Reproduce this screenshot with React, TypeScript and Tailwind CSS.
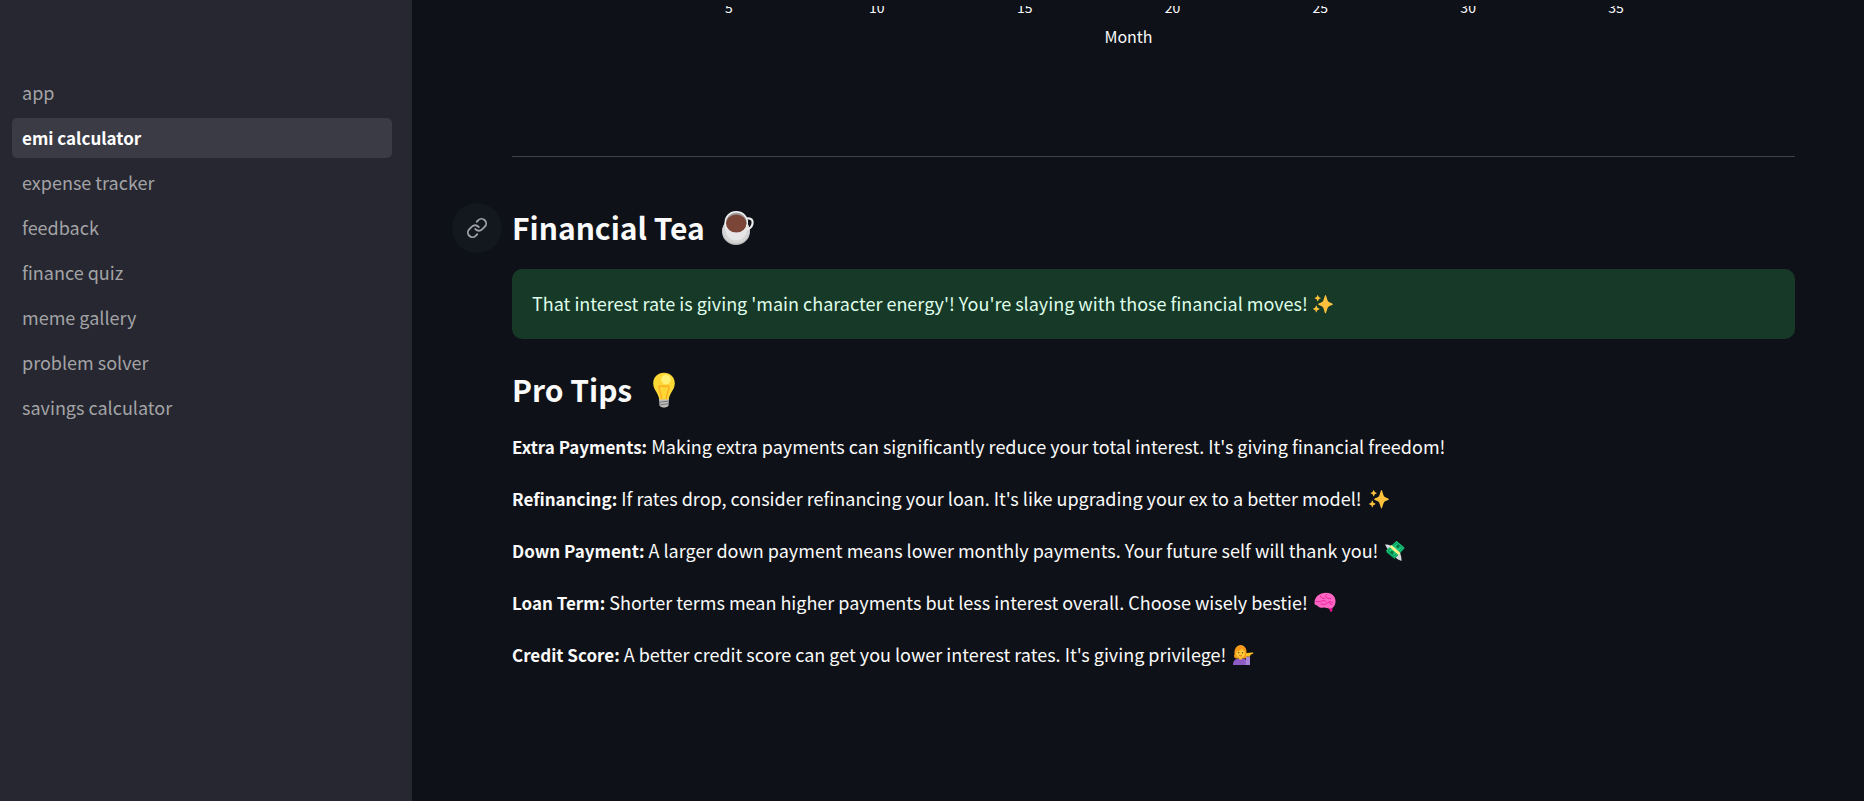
import type { ReactNode } from 'react';

const pages = [
  'app',
  'emi calculator',
  'expense tracker',
  'feedback',
  'finance quiz',
  'meme gallery',
  'problem solver',
  'savings calculator',
];

const months = [5, 10, 15, 20, 25, 30, 35];

function LinkIcon() {
  return (
    <svg viewBox="0 0 24 24" className="size-[22px]" fill="none" stroke="currentColor" strokeWidth="2" strokeLinecap="round" strokeLinejoin="round" aria-hidden="true">
      <path d="M10 13a5 5 0 0 0 7.54.54l3-3a5 5 0 0 0-7.07-7.07l-1.72 1.71" />
      <path d="M14 11a5 5 0 0 0-7.54-.54l-3 3a5 5 0 0 0 7.07 7.07l1.71-1.71" />
    </svg>
  );
}

function Cup() {
  return (
    <svg viewBox="0 0 34 36" className="h-9 w-[34px]" role="img" aria-label="Cup of tea">
      <ellipse cx="15" cy="21.500" rx="14" ry="13.500" fill="#bdbdbd" />
      <ellipse cx="15" cy="20.500" rx="13.600" ry="13" fill="#d4d4d4" />
      <path d="M26 8.5c4-1 6.500 2 5.500 5.500-.8 3-3.500 5.300-7 5.500" fill="none" stroke="#eeeeee" strokeWidth="2.200" />
      <path d="M3.600 12c0 10 2.400 18.500 11.400 18.500S27 22 27 12z" fill="#e6e6e6" />
      <ellipse cx="15.300" cy="11.800" rx="11.700" ry="10.800" fill="#f5f5f5" />
      <ellipse cx="15.300" cy="12.200" rx="10.400" ry="9.600" fill="#9e9e9e" />
      <ellipse cx="15.300" cy="13.600" rx="10.200" ry="9" fill="#7b4637" />
    </svg>
  );
}

function Bulb() {
  return (
    <svg viewBox="0 0 24 36" className="h-9 w-6" role="img" aria-label="Light bulb">
      <path d="M7 27h10l-.5 6.500c-1 1.500-2.500 2-4.500 2s-3.500-.5-4.500-2z" fill="#bdbdbd" />
      <path d="M7.300 30.300l9.400-1.300M7.500 33l9-1.300" stroke="#757575" strokeWidth="1" />
      <path d="M12 .8C5.800.8 1.200 5.300 1.200 11.200c0 6.800 5.200 9.300 6 16.300h9.600c.8-7 6-9.500 6-16.300C22.800 5.300 18.200.8 12 .8z" fill="#fdd835" />
      <path d="M9.700 27c0-5-3-9-2.600-12.500 1.300-2 2.400 1.200 4.900-.5 2.500 1.700 3.600-1.500 4.900.5.400 3.500-2.600 7.500-2.600 12.500" fill="none" stroke="#ffa726" strokeWidth="1.300" />
      <circle cx="14" cy="7.500" r="4.800" fill="#fff176" />
    </svg>
  );
}

function Sparkles() {
  return (
    <svg viewBox="0 0 22 22" className="size-[22px]" role="img" aria-label="Sparkles" fill="#fbc13c">
      <path d="M13.500 2c.8 0 1.600 5.400 2.800 6.600S21 10.600 21 11.300s-3.500 1.500-4.700 2.700-2 6.500-2.800 6.500-1.600-5.300-2.800-6.500S6 12 6 11.300s3.500-1.500 4.700-2.700S12.700 2 13.500 2z" />
      <path d="M5.700 2c.5 0 .7 1.700 1.100 2.100s1.900.6 1.900 1.100-1.500.7-1.900 1.100-.6 2.100-1.100 2.100-.7-1.700-1.100-2.100-1.900-.6-1.900-1.100 1.500-.7 1.900-1.100S5.200 2 5.700 2zM4.300 12.500c.5 0 .8 1.800 1.200 2.200s2 .7 2 1.200-1.600.8-2 1.200-.7 2.300-1.200 2.300-.8-1.900-1.200-2.300-2-.7-2-1.200 1.600-.8 2-1.200.7-2.200 1.200-2.200z" />
    </svg>
  );
}

function Money() {
  return (
    <svg viewBox="0 0 22 22" className="size-[22px]" role="img" aria-label="Money with wings">
      <path d="M1 4.500c3 0 5.500.5 8 2.500l-4 4C4 9 2 7 1 4.500z" fill="#d5dade" />
      <path d="M11 16.500l5-3.500c1 2 1.500 5 1.500 8-2-.8-5-2-6.500-4.500z" fill="#d5dade" />
      <path d="M12.500 1L20.500 8.500 10.500 19 2 12z" fill="#089b58" />
      <path d="M12.500 1L20.500 7.500 10.500 17.500 2 10.500z" fill="#19c97c" />
      <path d="M12.400 3L18.500 7.700 10.300 15.800 4 10.700z" fill="none" stroke="#08824b" strokeWidth=".8" />
      <circle cx="14" cy="6.500" r="1.700" fill="#087744" />
      <circle cx="8" cy="12.500" r="1.700" fill="#087744" />
      <path d="M5.500 7l2-2 9 8-2 2z" fill="#fff08a" />
    </svg>
  );
}

function Brain() {
  return (
    <svg viewBox="0 0 22 22" className="size-[22px]" role="img" aria-label="Brain">
      <path d="M12.500 14l5.500-.5c0 2 .6 3 .5 4.500-.2 1.200-.8 2-1.500 2-1 0-.8-2.500-2.500-3.500z" fill="#e0108c" />
      <path d="M.5 11C.5 5 5.500.8 12 .8c5.500 0 9.500 3.400 9.500 8.200 0 4.300-2 7.500-6 7.500-2 0-3.500-1-5.500-1-1.500.2-2.500.5-4 0C4 15 3.500 13.500 2.500 13.300 1.200 13 .5 12.300.5 11z" fill="#ff66c4" />
      <path d="M6.500 4c.2 2 2 2.500 4 2.300M12.500 2.500c-1.500 1-1 2.500.5 3.500 1 .8 2.500.8 4 .3M2 9.500c2 0 4 .5 6-.5 1.500-.8 3-.5 4 .5M7 12c2.500.8 5 .5 7-1.500 1.500-1.200 3-1 4.500 0M15.500 10c0 1.500 1 2.500 2.500 2.500" fill="none" stroke="#e91e9b" strokeWidth=".9" strokeLinecap="round" />
    </svg>
  );
}

function TippingHand() {
  return (
    <svg viewBox="0 0 22 22" className="size-[22px]" role="img" aria-label="Woman tipping hand">
      <path d="M2.500 10C2 4.500 5 1 8.500 1s6.500 3 6 8c1 2 .5 5-1.500 5.500H4c-2-.5-2.500-2.500-1.500-4.500z" fill="#f79a1c" />
      <path d="M1 21c0-5 2.500-6.500 7.500-6.500s7 1.500 7 6.500z" fill="#8e5cc4" />
      <path d="M6.800 12.500h3.400v2.200c-.8 1.200-2.600 1.200-3.400 0z" fill="#f7b928" />
      <ellipse cx="8.500" cy="9" rx="4.500" ry="5" fill="#ffca36" />
      <path d="M4 7.500c3 0 5-1 6-3 .5 1.500 1.500 2.500 3 3C13 4.500 11 2.800 8.500 2.800S4 4.500 4 7.500z" fill="#f79a1c" />
      <circle cx="6.700" cy="8.800" r=".7" fill="#5a3a24" />
      <circle cx="10.400" cy="8.800" r=".7" fill="#5a3a24" />
      <path d="M7.200 11.500c.8.500 1.800.5 2.600 0" stroke="#d8452f" strokeWidth=".9" fill="none" />
      <path d="M13.500 21l.5-8.500h4V21z" fill="#a884d8" />
      <path d="M14 12.500c0-1.500-.5-3 1-3.500 2 0 4-.8 6-.5.800.6.200 1.300-1 1.500-1.200.5-2 1.500-2 2.500z" fill="#fcc21b" />
    </svg>
  );
}

const tips: { label: string; text: string; icon?: ReactNode }[] = [
  { label: 'Extra Payments:', text: "Making extra payments can significantly reduce your total interest. It's giving financial freedom!" },
  { label: 'Refinancing:', text: "If rates drop, consider refinancing your loan. It's like upgrading your ex to a better model!", icon: <Sparkles /> },
  { label: 'Down Payment:', text: 'A larger down payment means lower monthly payments. Your future self will thank you!', icon: <Money /> },
  { label: 'Loan Term:', text: 'Shorter terms mean higher payments but less interest overall. Choose wisely bestie!', icon: <Brain /> },
  { label: 'Credit Score:', text: "A better credit score can get you lower interest rates. It's giving privilege!", icon: <TippingHand /> },
];

export default function App() {
  return (
    <div className="flex min-h-screen bg-[#0e1117] font-['Noto_Sans_CJK_SC',sans-serif] text-lg text-[#fafafa]">
      <aside className="w-[412px] shrink-0 bg-[#262730] pt-[73px] pr-5 pl-3">
        <nav aria-label="Pages">
          <ul className="flex flex-col gap-[5px]">
            {pages.map((page) => (
              <li key={page}>
                <a
                  href="#"
                  aria-current={page === 'emi calculator' ? 'page' : undefined}
                  className={
                    page === 'emi calculator'
                      ? 'block h-10 rounded-[5px] bg-[#3b3b46] px-[10px] text-[17px] leading-10 font-bold text-white'
                      : 'block h-10 rounded-[5px] px-[10px] leading-[38px] text-[#a3a3a6]'
                  }
                >
                  {page}
                </a>
              </li>
            ))}
          </ul>
        </nav>
      </aside>

      <main className="min-w-0 flex-1 pr-[69px] pl-[100px]">
        <section aria-label="Chart axis" className="flex h-[156px] flex-col pt-1.5">
          <div className="flex h-5 justify-between overflow-hidden pr-[159px] pl-[197px] text-sm leading-5">
            {months.map((month) => (
              <span key={month} className="-mt-[9px] flex w-10 justify-center">
                {month}
              </span>
            ))}
          </div>
          <p className="pr-[50px] text-center text-base leading-5">Month</p>
        </section>

        <hr className="border-t border-[#414347]" />

        <div className="flex h-[112px] items-end pb-5">
          <h3 className="-ml-[60px] flex items-center text-3xl leading-10 font-bold">
            <a href="#financial-tea" aria-label="Link to Financial Tea" className="-my-1 mr-[10px] flex size-[50px] items-center justify-center rounded-full bg-[#13171e] text-[#a0a1a4]">
              <LinkIcon />
            </a>
            <span className="mr-4 pb-0.5 leading-10">Financial Tea</span>
            <Cup />
          </h3>
        </div>

        <div role="alert" className="flex items-center gap-1 rounded-[10px] bg-[#173928] p-5 text-[#dffde9]">
          <span className="pb-0.5 leading-7">That interest rate is giving 'main character energy'! You're slaying with those financial moves!</span>
          <Sparkles />
        </div>

        <h3 className="mt-[30px] mb-5 flex items-center text-3xl font-bold">
          <span className="mr-5 pb-0.5 leading-10">Pro Tips</span>
          <Bulb />
        </h3>

        <div className="flex flex-col gap-5">
          {tips.map((tip) => (
            <p key={tip.label} className="flex min-h-8 items-center gap-[6px]">
              <span className="pb-0.5 leading-7">
                <strong className="text-[17px] font-bold">{tip.label}</strong> {tip.text}
              </span>
              {tip.icon}
            </p>
          ))}
        </div>
      </main>
    </div>
  );
}
